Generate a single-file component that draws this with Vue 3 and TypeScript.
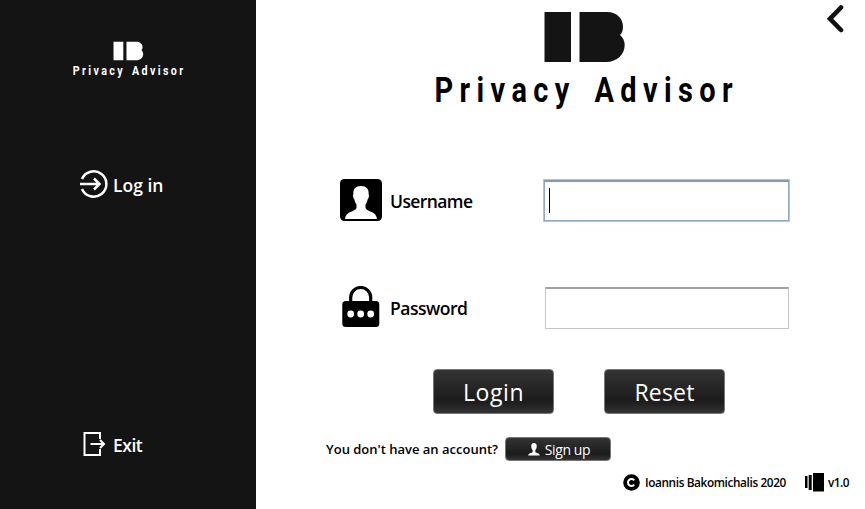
<script setup lang="ts">
import { defineComponent, h, ref } from 'vue'

const BrandLogo = defineComponent({
  name: 'BrandLogo',
  setup() {
    return () =>
      h('svg', { viewBox: '0 0 300 100', fill: 'currentColor' }, [
        h('g', { class: 'monogram' }, [
          h('rect', { x: 109.5, y: 2, width: 26.5, height: 50 }),
          h('path', { d: 'M144.500 2H172C182 2 188 9 188 16.500C188 20.500 187 23 185 25C188 27.500 189.700 31 189.700 35C189.700 44 182.500 52 171 52H144.500Z' }),
        ]),
        h(
          'text',
          {
            transform: 'translate(-.500 92.200) scale(.84 1)',
            textLength: 355,
            'word-spacing': 6,
            'font-family': 'Roboto, "Liberation Sans", sans-serif',
            'font-size': 34.5,
            'font-weight': 700,
          },
          'Privacy Advisor',
        ),
      ])
  },
})

const username = ref('')
const password = ref('')

function reset(): void {
  username.value = ''
  password.value = ''
}
</script>

<template>
  <div class="window">
    <aside class="sidebar">
      <BrandLogo class="logo-small" />
      <a class="nav login-link">
        <svg width="30" height="30" viewBox="0 0 30 30" fill="none" stroke="currentColor" stroke-width="2.500">
          <path d="M3 10A12.700 12.700 0 1 1 3 20" />
          <path d="M1 15H20.500M15 9.500L20.500 15L15 20.500" />
        </svg>
        <span>Log in</span>
      </a>
      <a class="nav exit-link">
        <svg width="23" height="26" viewBox="0 0 23 26" fill="none" stroke="currentColor" stroke-width="2">
          <path d="M17 8V2H1.500V24H17V18" />
          <path d="M7.500 13H21M17 9L21 13L17 17" />
        </svg>
        <span>Exit</span>
      </a>
    </aside>

    <main class="main">
      <header class="header">
        <BrandLogo class="logo-large" />
        <svg class="back" width="18" height="30" viewBox="0 0 18 30" fill="none" stroke="#111" stroke-width="4.600" stroke-linecap="round">
          <path d="M15 3.500L4 14.800L15 26" stroke-linejoin="miter" />
        </svg>
      </header>

      <form class="form" @submit.prevent>
        <label class="row">
          <svg width="42" height="42" viewBox="0 0 42 42">
            <rect width="42" height="42" rx="4.500" />
            <path fill="#fff" d="M21 7C15.500 7 13 10 13.400 15C12.500 16 13.200 19.500 14.400 20.500C15 23 15.700 24.500 16.500 25.500V29C15 33 5.500 32 5 40H37C36.500 32 27 33 25.500 29V25.500C26.300 24.500 27 23 27.600 20.500C28.800 19.500 29.500 16 28.600 15C29 10 26.500 7 21 7Z" />
          </svg>
          <span class="label user-label">Username</span>
          <span class="field focused">
            <i class="caret"></i>
            <input v-model="username" type="text" />
          </span>
        </label>
        <label class="row password-row">
          <svg width="42" height="42" viewBox="0 0 42 42">
            <path fill="none" stroke="#000" stroke-width="3.200" d="M10.700 17V11.500A10 10 0 0 1 30.700 11.500V17" />
            <rect x="2.300" y="15" width="37" height="26" rx="3.500" />
            <g fill="#fff">
              <circle cx="10.700" cy="28" r="3.400" />
              <circle cx="20.700" cy="28" r="3.400" />
              <circle cx="30.700" cy="28" r="3.400" />
            </g>
          </svg>
          <span class="label pass-label">Password</span>
          <span class="field">
            <input v-model="password" type="password" />
          </span>
        </label>
        <div class="actions">
          <button class="btn large" type="submit"><span class="login-text">Login</span></button>
          <button class="btn large" type="button" @click="reset"><span class="reset-text">Reset</span></button>
        </div>
      </form>

      <div class="signup">
        <span class="question">You don't have an account?</span>
        <button class="btn small" type="button">
          <svg width="12" height="13" viewBox="0 0 12 13" fill="#fff">
            <path d="M6 0C4 0 3 1.500 3.300 3.500C3.300 5.500 4 6.500 4.700 7.200V9C3.500 10.500 .5 9.500 .3 12.500H11.700C11.500 9.500 8.500 10.500 7.300 9V7.200C8 6.500 8.700 5.500 8.700 3.500C9 1.500 8 0 6 0Z" />
          </svg>
          <span>Sign up</span>
        </button>
      </div>

      <footer class="footer">
        <svg width="17" height="17" viewBox="0 0 17 17">
          <circle cx="8.500" cy="8.500" r="8.300" />
          <path d="M11.200 6.300A3.500 3.500 0 1 0 11.200 10.700" fill="none" stroke="#fff" stroke-width="2" />
        </svg>
        <span class="author">Ioannis Bakomichalis 2020</span>
        <svg class="version-icon" width="19" height="19" viewBox="0 0 19 19">
          <path d="M0 3H2.500V15H0ZM3.700 2H6.700V17H3.700ZM8 0H19V18.500H8Z" />
        </svg>
        <span class="version">v1.0</span>
      </footer>
    </main>
  </div>
</template>

<style>
body {
  overflow: hidden;
}
</style>

<style scoped>
.window {
  display: flex;
  width: 865px;
  height: 509px;
  background: #fff;
  color: #000;
  font-family: "Open Sans", "Noto Sans", sans-serif;
}
svg {
  display: block;
  flex: none;
}
.sidebar {
  box-sizing: border-box;
  width: 256px;
  padding: 41px 0 0 73px;
  background: #141414;
  color: #fff;
}
.logo-small {
  width: 111px;
  height: 37px;
}
.nav {
  display: flex;
  align-items: center;
  height: 30px;
  font-size: 17.5px;
  font-weight: 600;
  line-height: 30px;
}
.login-link {
  gap: 4px;
  margin: 91px 0 0 6px;
}
.login-link span {
  padding-top: 2px;
  letter-spacing: 0;
}
.exit-link {
  gap: 7px;
  margin: 230px 0 0 10px;
}
.exit-link span {
  padding-top: 2px;
  letter-spacing: -0.5px;
}
.main {
  flex: 1;
}
.header {
  display: flex;
  justify-content: space-between;
  box-sizing: border-box;
  height: 179px;
  padding: 10px 21px 0 179px;
}
.logo-large {
  width: 300px;
  height: 100px;
}
.logo-large :deep(.monogram) {
  fill: #141414;
}
.back {
  margin-top: -6px;
}
.form {
  padding-left: 84px;
}
.row {
  display: grid;
  grid-template-columns: 50px 153px 247px;
  height: 43px;
}
.password-row {
  margin-top: 64px;
}
.label {
  font-size: 17.5px;
  font-weight: 600;
  line-height: 45px;
}
.user-label {
  letter-spacing: -0.6px;
}
.pass-label {
  letter-spacing: -0.5px;
}
.field {
  position: relative;
  box-sizing: border-box;
  width: 244px;
  height: 42px;
  margin: 1px 0 0 2px;
  border: 1px solid #c4c4c4;
  border-top: 2px solid #a2a2a2;
}
.field.focused {
  width: 247px;
  height: 43px;
  margin: 0;
  border: 2px solid #8fa8c8;
  border-top: 3px solid #8499b2;
  outline: 1px solid #a9c8e8;
  outline-offset: -1px;
}
.field input {
  display: block;
  box-sizing: border-box;
  width: 100%;
  height: 100%;
  padding: 0 6px;
  border: 0;
  outline: 0;
  background: none;
  font: 18px "Open Sans", sans-serif;
}
.caret {
  position: absolute;
  top: 6px;
  left: 4px;
  width: 1px;
  height: 25px;
  background: #000;
}
.actions {
  display: flex;
  gap: 50px;
  margin: 40px 0 0 93px;
}
.btn {
  display: flex;
  align-items: center;
  justify-content: center;
  box-sizing: border-box;
  padding: 0;
  border: 1px solid #777;
  border-radius: 4px;
  background: linear-gradient(#343434, #1d1d1d 65%, #1d1d1d 75%, #343434);
  color: #fff;
  font-family: "Open Sans", "Noto Sans", sans-serif;
}
.btn.large {
  width: 121px;
  height: 45px;
  font-size: 23px;
}
.login-text {
  letter-spacing: 0.6px;
}
.reset-text {
  letter-spacing: 0.2px;
}
.btn.small {
  gap: 5px;
  width: 106px;
  height: 24px;
  font-size: 14px;
  font-weight: 500;
}
.btn.small svg {
  margin-left: 2px;
}
.btn.small span {
  padding-top: 1px;
  letter-spacing: -0.4px;
}
.signup {
  display: flex;
  align-items: center;
  height: 24px;
  margin-top: 23px;
  padding-left: 70px;
}
.question {
  width: 179px;
  font-size: 13px;
  font-weight: 600;
  white-space: nowrap;
}
.footer {
  display: flex;
  align-items: center;
  height: 20px;
  margin-top: 11px;
  padding-left: 367px;
  font-size: 11.8px;
  font-weight: 600;
  white-space: nowrap;
}
.author {
  width: 160px;
  margin-left: 5px;
  letter-spacing: -0.38px;
}
.version {
  margin-left: 4px;
  letter-spacing: -0.5px;
}
</style>
